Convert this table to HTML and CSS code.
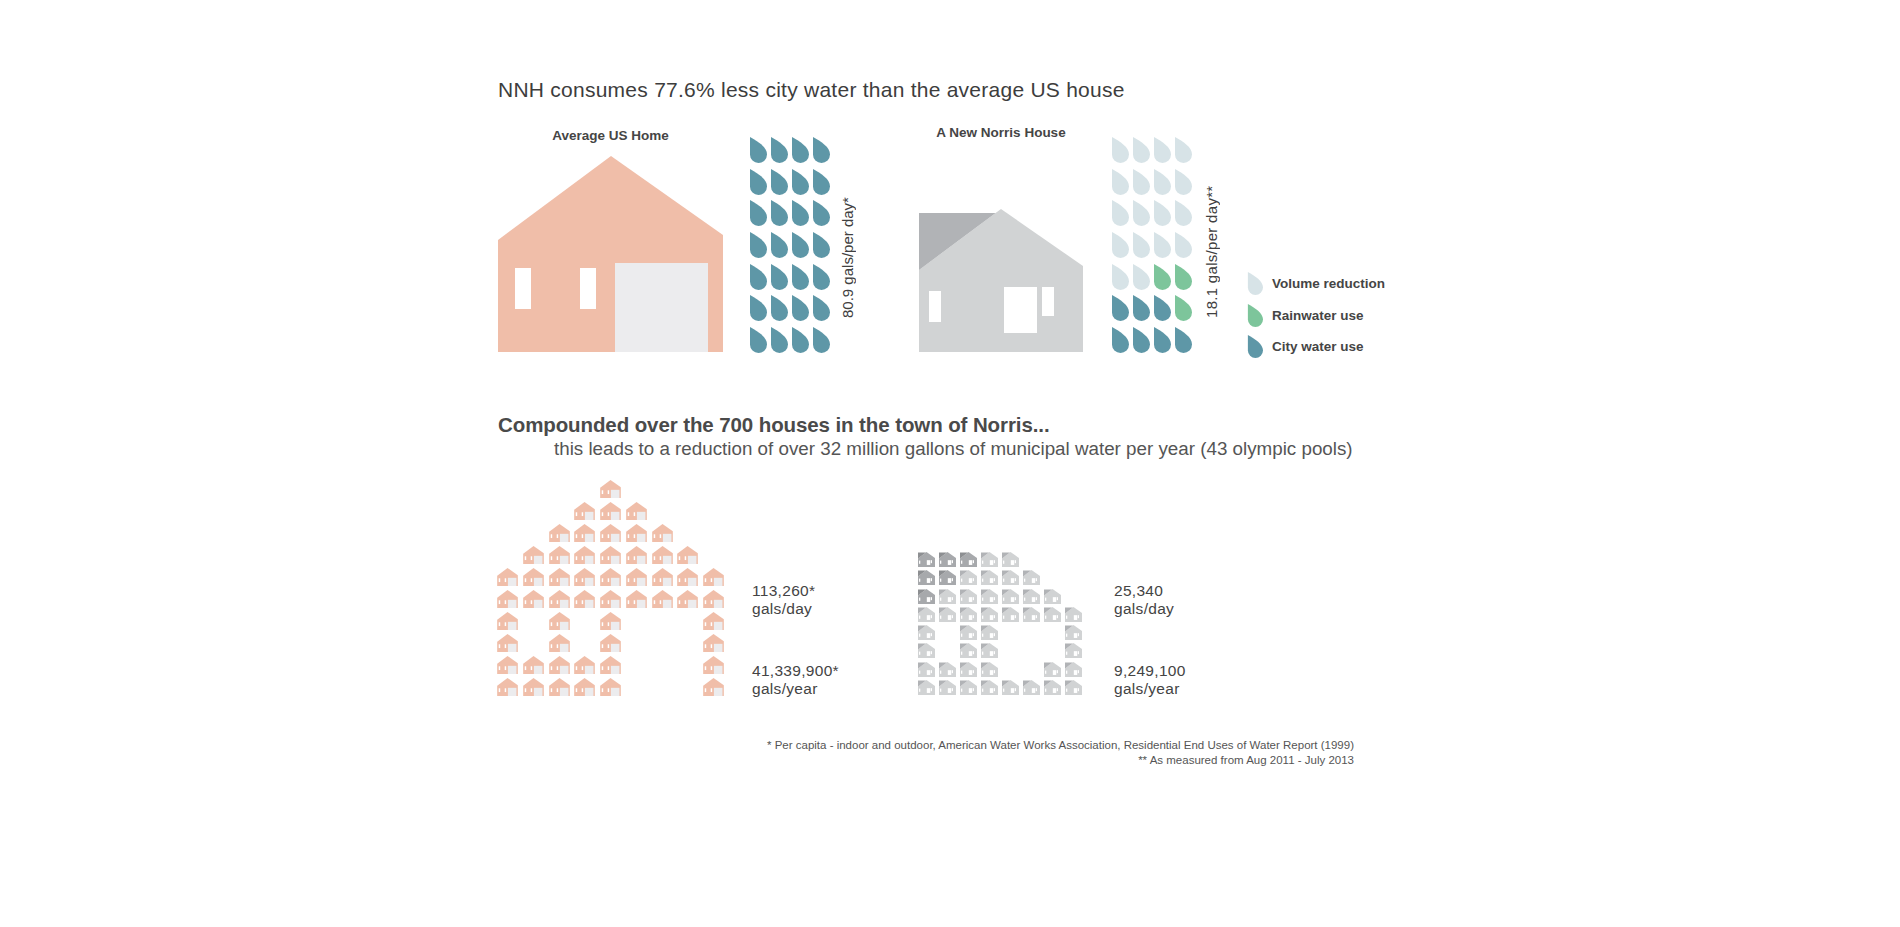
FILE: index.html
```html
<!DOCTYPE html>
<html lang="en">
<head>
<meta charset="utf-8">
<title>NNH water use</title>
<link rel="stylesheet" href="styles.css">
</head>
<body>
<svg class="defs" aria-hidden="true">
  <defs>
    <symbol id="drop" viewBox="0 0 18 26"><path d="M1 0L1 17.5A8.5 8.5 0 0 0 18 17.5C18 10 9 4.5 1 0Z"/></symbol>
    <symbol id="hr" viewBox="0 0 225 196">
      <path fill="#f0bea9" d="M0 196V84L113 0L225 79V196Z"/>
      <rect fill="#fff" x="17" y="112" width="16" height="41"/>
      <rect fill="#fff" x="82" y="112" width="16" height="41"/>
      <rect fill="#ececee" x="117" y="107" width="93" height="89"/>
    </symbol>
    <symbol id="hn" viewBox="0 0 164 143">
      <path fill="#d1d3d4" d="M0 143V61L82 0L164 57V143Z"/>
      <path fill="#b1b3b6" d="M0 4H76.6L0 61Z"/>
      <rect fill="#fff" x="10" y="82" width="12" height="31"/>
      <rect fill="#fff" x="85" y="78" width="33" height="46"/>
      <rect fill="#fff" x="123" y="78" width="12" height="29"/>
    </symbol>
    <symbol id="hd" viewBox="0 0 164 143">
      <path fill="#a7a9ac" d="M0 143V61L82 0L164 57V143Z"/>
      <path fill="#8d8f92" d="M0 4H76.6L0 61Z"/>
      <rect fill="#fff" x="10" y="82" width="12" height="31"/>
      <rect fill="#fff" x="85" y="78" width="33" height="46"/>
      <rect fill="#fff" x="123" y="78" width="12" height="29"/>
    </symbol>
  </defs>
</svg>

<main class="wrap">
  <h1 class="title">NNH consumes 77.6% less city water than the average US house</h1>

  <section class="compare">
    <div class="house-col avg">
      <div class="label">Average US Home</div>
      <svg class="big-avg"><use href="#hr"/></svg>
    </div>
    <div class="drops avg-drops">
      <svg class="b"><use href="#drop"/></svg><svg class="b"><use href="#drop"/></svg><svg class="b"><use href="#drop"/></svg><svg class="b"><use href="#drop"/></svg>
      <svg class="b"><use href="#drop"/></svg><svg class="b"><use href="#drop"/></svg><svg class="b"><use href="#drop"/></svg><svg class="b"><use href="#drop"/></svg>
      <svg class="b"><use href="#drop"/></svg><svg class="b"><use href="#drop"/></svg><svg class="b"><use href="#drop"/></svg><svg class="b"><use href="#drop"/></svg>
      <svg class="b"><use href="#drop"/></svg><svg class="b"><use href="#drop"/></svg><svg class="b"><use href="#drop"/></svg><svg class="b"><use href="#drop"/></svg>
      <svg class="b"><use href="#drop"/></svg><svg class="b"><use href="#drop"/></svg><svg class="b"><use href="#drop"/></svg><svg class="b"><use href="#drop"/></svg>
      <svg class="b"><use href="#drop"/></svg><svg class="b"><use href="#drop"/></svg><svg class="b"><use href="#drop"/></svg><svg class="b"><use href="#drop"/></svg>
      <svg class="b"><use href="#drop"/></svg><svg class="b"><use href="#drop"/></svg><svg class="b"><use href="#drop"/></svg><svg class="b"><use href="#drop"/></svg>
    </div>
    <div class="vlabel">80.9 gals/per day*</div>

    <div class="house-col nnh">
      <div class="label">A New Norris House</div>
      <svg class="big-nnh"><use href="#hn"/></svg>
    </div>
    <div class="drops nnh-drops">
      <svg class="l"><use href="#drop"/></svg><svg class="l"><use href="#drop"/></svg><svg class="l"><use href="#drop"/></svg><svg class="l"><use href="#drop"/></svg>
      <svg class="l"><use href="#drop"/></svg><svg class="l"><use href="#drop"/></svg><svg class="l"><use href="#drop"/></svg><svg class="l"><use href="#drop"/></svg>
      <svg class="l"><use href="#drop"/></svg><svg class="l"><use href="#drop"/></svg><svg class="l"><use href="#drop"/></svg><svg class="l"><use href="#drop"/></svg>
      <svg class="l"><use href="#drop"/></svg><svg class="l"><use href="#drop"/></svg><svg class="l"><use href="#drop"/></svg><svg class="l"><use href="#drop"/></svg>
      <svg class="l"><use href="#drop"/></svg><svg class="l"><use href="#drop"/></svg><svg class="g"><use href="#drop"/></svg><svg class="g"><use href="#drop"/></svg>
      <svg class="b"><use href="#drop"/></svg><svg class="b"><use href="#drop"/></svg><svg class="b"><use href="#drop"/></svg><svg class="g"><use href="#drop"/></svg>
      <svg class="b"><use href="#drop"/></svg><svg class="b"><use href="#drop"/></svg><svg class="b"><use href="#drop"/></svg><svg class="b"><use href="#drop"/></svg>
    </div>
    <div class="vlabel nnh-v">18.1 gals/per day**</div>

    <ul class="legend">
      <li class="legend-row"><svg class="l"><use href="#drop"/></svg>Volume reduction</li>
      <li class="legend-row"><svg class="g"><use href="#drop"/></svg>Rainwater use</li>
      <li class="legend-row"><svg class="b"><use href="#drop"/></svg>City water use</li>
    </ul>
  </section>

  <h2 class="h2">Compounded over the 700 houses in the town of Norris...</h2>
  <p class="sub">this leads to a reduction of over 32 million gallons of municipal water per year (43 olympic pools)</p>

  <section class="town">
    <div class="red-grid">
      <b></b><b></b><b></b><b></b><svg><use href="#hr"/></svg><b></b><b></b><b></b><b></b>
      <b></b><b></b><b></b><svg><use href="#hr"/></svg><svg><use href="#hr"/></svg><svg><use href="#hr"/></svg><b></b><b></b><b></b>
      <b></b><b></b><svg><use href="#hr"/></svg><svg><use href="#hr"/></svg><svg><use href="#hr"/></svg><svg><use href="#hr"/></svg><svg><use href="#hr"/></svg><b></b><b></b>
      <b></b><svg><use href="#hr"/></svg><svg><use href="#hr"/></svg><svg><use href="#hr"/></svg><svg><use href="#hr"/></svg><svg><use href="#hr"/></svg><svg><use href="#hr"/></svg><svg><use href="#hr"/></svg><b></b>
      <svg><use href="#hr"/></svg><svg><use href="#hr"/></svg><svg><use href="#hr"/></svg><svg><use href="#hr"/></svg><svg><use href="#hr"/></svg><svg><use href="#hr"/></svg><svg><use href="#hr"/></svg><svg><use href="#hr"/></svg><svg><use href="#hr"/></svg>
      <svg><use href="#hr"/></svg><svg><use href="#hr"/></svg><svg><use href="#hr"/></svg><svg><use href="#hr"/></svg><svg><use href="#hr"/></svg><svg><use href="#hr"/></svg><svg><use href="#hr"/></svg><svg><use href="#hr"/></svg><svg><use href="#hr"/></svg>
      <svg><use href="#hr"/></svg><b></b><svg><use href="#hr"/></svg><b></b><svg><use href="#hr"/></svg><b></b><b></b><b></b><svg><use href="#hr"/></svg>
      <svg><use href="#hr"/></svg><b></b><svg><use href="#hr"/></svg><b></b><svg><use href="#hr"/></svg><b></b><b></b><b></b><svg><use href="#hr"/></svg>
      <svg><use href="#hr"/></svg><svg><use href="#hr"/></svg><svg><use href="#hr"/></svg><svg><use href="#hr"/></svg><svg><use href="#hr"/></svg><b></b><b></b><b></b><svg><use href="#hr"/></svg>
      <svg><use href="#hr"/></svg><svg><use href="#hr"/></svg><svg><use href="#hr"/></svg><svg><use href="#hr"/></svg><svg><use href="#hr"/></svg><b></b><b></b><b></b><svg><use href="#hr"/></svg>
    </div>
    <div class="stats red-stats">
      <p>113,260*<br>gals/day</p>
      <p>41,339,900*<br>gals/year</p>
    </div>

    <div class="gray-grid">
      <svg><use href="#hd"/></svg><svg><use href="#hd"/></svg><svg><use href="#hd"/></svg><svg><use href="#hn"/></svg><svg><use href="#hn"/></svg><b></b><b></b><b></b>
      <svg><use href="#hd"/></svg><svg><use href="#hd"/></svg><svg><use href="#hn"/></svg><svg><use href="#hn"/></svg><svg><use href="#hn"/></svg><svg><use href="#hn"/></svg><b></b><b></b>
      <svg><use href="#hd"/></svg><svg><use href="#hn"/></svg><svg><use href="#hn"/></svg><svg><use href="#hn"/></svg><svg><use href="#hn"/></svg><svg><use href="#hn"/></svg><svg><use href="#hn"/></svg><b></b>
      <svg><use href="#hn"/></svg><svg><use href="#hn"/></svg><svg><use href="#hn"/></svg><svg><use href="#hn"/></svg><svg><use href="#hn"/></svg><svg><use href="#hn"/></svg><svg><use href="#hn"/></svg><svg><use href="#hn"/></svg>
      <svg><use href="#hn"/></svg><b></b><svg><use href="#hn"/></svg><svg><use href="#hn"/></svg><b></b><b></b><b></b><svg><use href="#hn"/></svg>
      <svg><use href="#hn"/></svg><b></b><svg><use href="#hn"/></svg><svg><use href="#hn"/></svg><b></b><b></b><b></b><svg><use href="#hn"/></svg>
      <svg><use href="#hn"/></svg><svg><use href="#hn"/></svg><svg><use href="#hn"/></svg><svg><use href="#hn"/></svg><b></b><b></b><svg><use href="#hn"/></svg><svg><use href="#hn"/></svg>
      <svg><use href="#hn"/></svg><svg><use href="#hn"/></svg><svg><use href="#hn"/></svg><svg><use href="#hn"/></svg><svg><use href="#hn"/></svg><svg><use href="#hn"/></svg><svg><use href="#hn"/></svg><svg><use href="#hn"/></svg>
    </div>
    <div class="stats gray-stats">
      <p>25,340<br>gals/day</p>
      <p>9,249,100<br>gals/year</p>
    </div>
  </section>

  <div class="notes">
    <p>* Per capita - indoor and outdoor, American Water Works Association, Residential End Uses of Water Report (1999)</p>
    <p>** As measured from Aug 2011 - July 2013</p>
  </div>
</main>
</body>
</html>
```

FILE: styles.css
```css
html, body {
  margin: 0;
  background: #ffffff;
}

body {
  font-family: "Liberation Sans", Arial, sans-serif;
  color: #4a4a4a;
}

.defs {
  position: absolute;
  width: 0;
  height: 0;
  overflow: hidden;
}

.wrap {
  display: block;
  padding-left: 498px;
  width: 900px;
}

.title {
  margin: 0;
  padding-top: 77px;
  font-size: 21px;
  letter-spacing: 0.25px;
  line-height: 26px;
  font-weight: normal;
  color: #3d3d3d;
}

/* comparison row */
.compare {
  display: flex;
  align-items: flex-start;
  margin-top: 21px;
  height: 230px;
}

.house-col {
  display: flex;
  flex-direction: column;
  align-items: center;
}

.house-col.avg {
  width: 225px;
  padding-top: 3px;
}

.house-col.nnh {
  width: 164px;
  margin-left: 63px;
}

.label {
  font-size: 13.5px;
  font-weight: bold;
  line-height: 18px;
  color: #454545;
}

.big-avg {
  display: block;
  width: 225px;
  height: 196px;
  margin-top: 11px;
}

.big-nnh {
  display: block;
  width: 164px;
  height: 143px;
  margin-top: 67px;
}

.drops {
  display: grid;
  grid-template-columns: repeat(4, 18px);
  grid-auto-rows: 26px;
  column-gap: 3px;
  row-gap: 5.7px;
  margin-top: 13px;
}

.drops svg {
  display: block;
  width: 18px;
  height: 26px;
}

.avg-drops {
  margin-left: 26px;
}

.nnh-drops {
  margin-left: 28px;
}

.b { fill: #5e97a7; }
.l { fill: #d7e3e7; }
.g { fill: #7dc59b; }

.vlabel {
  writing-mode: vertical-rl;
  transform: rotate(180deg);
  height: 194px;
  font-size: 15px;
  line-height: 16px;
  margin-left: 10px;
  color: #404040;
}

.nnh-v {
  margin-left: 12px;
  letter-spacing: 0.3px;
}

.legend {
  list-style: none;
  padding: 0;
  margin: 144px 0 0 27px;
  display: flex;
  flex-direction: column;
}

.legend-row {
  display: flex;
  align-items: center;
  height: 31.5px;
  gap: 9px;
  font-size: 13.5px;
  font-weight: bold;
  color: #454545;
}

.legend-row svg {
  display: block;
  width: 16px;
  height: 25px;
}

/* town section */
.h2 {
  margin: 58px 0 0;
  font-size: 20.5px;
  letter-spacing: -0.1px;
  line-height: 26px;
  font-weight: bold;
  color: #4a4a4a;
}

.sub {
  margin: 0;
  padding-left: 56px;
  font-size: 18.8px;
  line-height: 22px;
  color: #555555;
}

.town {
  display: flex;
  align-items: flex-start;
  margin-top: 20px;
  height: 218px;
}

.red-grid {
  display: grid;
  grid-template-columns: repeat(9, 21px);
  grid-auto-rows: 18px;
  column-gap: 4.75px;
  row-gap: 4px;
  margin-left: -1px;
}

.red-grid svg {
  display: block;
  width: 21px;
  height: 18px;
}

.gray-grid {
  display: grid;
  grid-template-columns: repeat(8, 17px);
  grid-auto-rows: 15px;
  column-gap: 4px;
  row-gap: 3.3px;
  margin-top: 72px;
}

.gray-grid svg {
  display: block;
  width: 17px;
  height: 15px;
}

.stats {
  display: flex;
  flex-direction: column;
  gap: 44px;
  margin-top: 102px;
  font-size: 15.5px;
  letter-spacing: 0.3px;
  line-height: 18px;
  color: #444444;
}

.stats p {
  margin: 0;
}

.red-stats {
  margin-left: 28px;
  width: 166px;
}

.gray-stats {
  margin-left: 32px;
}

.notes {
  margin-top: 40px;
  width: 856px;
  text-align: right;
  font-size: 11.5px;
  line-height: 14.5px;
  color: #555555;
}

.notes p {
  margin: 0;
}
```
